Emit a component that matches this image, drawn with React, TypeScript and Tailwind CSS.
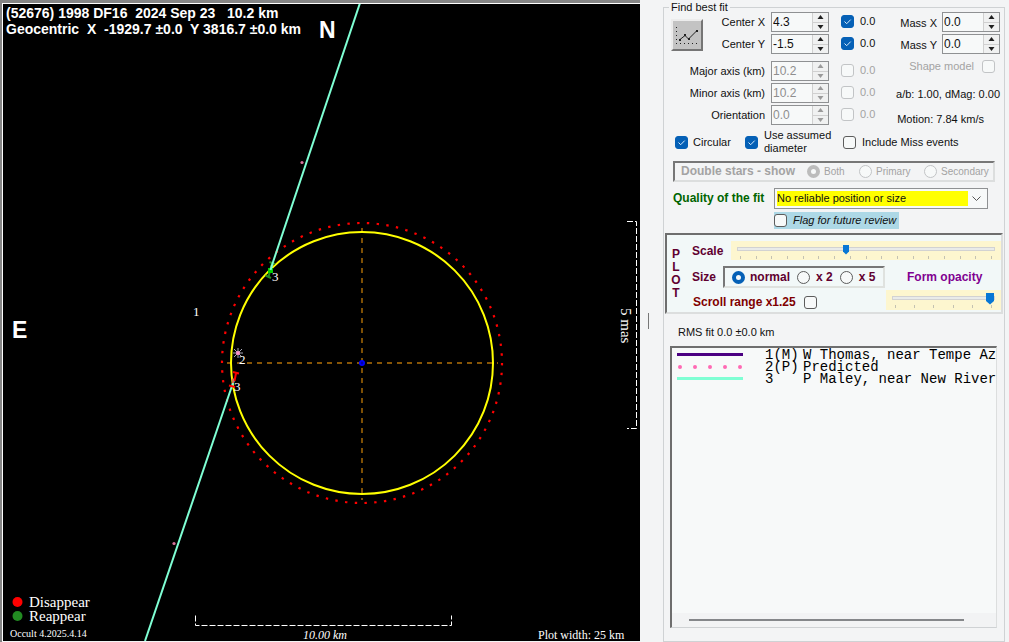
import React, { useState } from "react";

const INK = "text-[#101010]";

function Check({
  id,
  defaultChecked,
  disabled,
  label,
}: {
  id: string;
  defaultChecked?: boolean;
  disabled?: boolean;
  label?: string;
}) {
  return (
    <span className="grid shrink-0 place-items-center">
      <input
        id={id}
        type="checkbox"
        aria-label={label}
        defaultChecked={defaultChecked}
        disabled={disabled}
        className="peer col-start-1 row-start-1 size-[13px] appearance-none rounded-[3px] border border-[#5c5c5c] bg-[#f7f9f9] checked:border-[#0560b6] checked:bg-[#0560b6] disabled:border-[#c2c4c6]"
      />
      <svg
        viewBox="0 0 13 13"
        className="pointer-events-none invisible col-start-1 row-start-1 size-[13px] peer-checked:visible"
      >
        <path d="M3.5 6.5 L5.7 8.7 L9.7 4.6" fill="none" stroke="#d9ecfb" strokeWidth="1" />
      </svg>
    </span>
  );
}

function Radio({
  name,
  label,
  defaultChecked,
  disabled,
  className,
}: {
  name: string;
  label: string;
  defaultChecked?: boolean;
  disabled?: boolean;
  className: string;
}) {
  return (
    <label className={"flex items-center whitespace-pre " + className}>
      <input
        type="radio"
        name={name}
        defaultChecked={defaultChecked}
        disabled={disabled}
        className="size-[13px] shrink-0 appearance-none rounded-full border border-[#5c5c5c] bg-[#f7f9f9] checked:border-4 checked:border-[#0560b6] disabled:border-[#c2c4c6] disabled:checked:border-[#bcbcbc]"
      />
      {label}
    </label>
  );
}

function Spin({ id, value, disabled }: { id: string; value: string; disabled?: boolean }) {
  const [v, setV] = useState(value);
  const step = (d: number) => setV((Number(v) + d).toFixed(1));
  const arrow = disabled ? "#9a9a9a" : "#202020";
  return (
    <span className="flex h-5 w-[58px] shrink-0 border border-[#8f9193] bg-[#f7f9f9]">
      <input
        id={id}
        value={v}
        disabled={disabled}
        onChange={(e) => setV(e.target.value)}
        className="w-0 min-w-0 flex-1 pl-px text-[12px] leading-4 text-[#101010] outline-none disabled:text-[#8e8e8e]"
      />
      <span className="flex w-4 flex-col bg-[#f0f1f1]">
        <button
          type="button"
          aria-label="Increase"
          disabled={disabled}
          onClick={() => step(0.1)}
          className="grid flex-1 place-items-center border-b border-l border-[#d0d0d0]"
        >
          <svg viewBox="0 0 7 4" className="h-1 w-[7px]">
            <path d="M3.5 0 L6.5 4 H.5Z" fill={arrow} />
          </svg>
        </button>
        <button
          type="button"
          aria-label="Decrease"
          disabled={disabled}
          onClick={() => step(-0.1)}
          className="grid flex-1 place-items-center border-l border-[#d0d0d0]"
        >
          <svg viewBox="0 0 7 4" className="h-1 w-[7px]">
            <path d="M.5 0 H6.5 L3.5 4Z" fill={arrow} />
          </svg>
        </button>
      </span>
    </span>
  );
}

const fitRows = [
  { id: "cx", label: "Center X", value: "4.3", on: true },
  { id: "cy", label: "Center Y", value: "-1.5", on: true },
  { id: "major", label: "Major axis (km)", value: "10.2", on: false },
  { id: "minor", label: "Minor axis (km)", value: "10.2", on: false },
  { id: "orient", label: "Orientation", value: "0.0", on: false },
];

function FitGrid() {
  return (
    <div className="grid grid-cols-[94px_58px_46px] grid-rows-[22px_27px_22px_22px_22px] items-start gap-x-[6px]">
      <button
        type="button"
        aria-label="Find best fit"
        className="col-start-1 row-span-2 row-start-1 mt-[7px] size-8 justify-self-start border-2 border-t-[#ececec] border-r-[#757575] border-b-[#757575] border-l-[#ececec] bg-[#c3c3c3]"
      >
        <svg viewBox="0 0 28 28" className="size-7">
          <g fill="none" stroke="#222">
            <path d="M3.5 6V23" strokeDasharray="1 3" />
            <path d="M3 22.5H26" strokeDasharray="1 3" />
            <path d="M7 18.500 L12 14.5 L15.5 18 L24 9.500" />
          </g>
          <path d="M6 18h2v2H6zM11 13h2v2h-2zM15 17h2v2h-2zM23 9h2v2h-2z" fill="#222" />
        </svg>
      </button>
      {fitRows.map((r, i) => (
        <React.Fragment key={r.id}>
          <label
            htmlFor={r.id}
            style={{ gridRow: i + 1 }}
            className="col-start-1 justify-self-end leading-[21px] whitespace-nowrap"
          >
            {r.label}
          </label>
          <div style={{ gridRow: i + 1 }} className="col-start-2">
            <Spin id={r.id} value={r.value} disabled={!r.on} />
          </div>
          <label
            style={{ gridRow: i + 1 }}
            className={
              "col-start-3 flex h-[19px] items-center gap-[6px] pl-[6px] " + (r.on ? "" : "text-[#a3a3a3]")
            }
          >
            <Check id={"use-" + r.id} defaultChecked={r.on} disabled={!r.on} />
            0.0
          </label>
        </React.Fragment>
      ))}
    </div>
  );
}

function Slider({
  label,
  value,
  ticks,
  thumb,
}: {
  label: string;
  value: number;
  ticks: number;
  thumb: string;
}) {
  return (
    <div className="flex-1 bg-[#fdf6cf] px-[6px]">
      <input
        type="range"
        aria-label={label}
        defaultValue={value}
        className={
          "block h-[15px] w-full appearance-none bg-transparent [&::-webkit-slider-runnable-track]:h-1 [&::-webkit-slider-runnable-track]:border [&::-webkit-slider-runnable-track]:border-[#d2d2d2] [&::-webkit-slider-runnable-track]:bg-[#e9ebe9] [&::-webkit-slider-thumb]:appearance-none [&::-webkit-slider-thumb]:bg-[#0877d5] [&::-webkit-slider-thumb]:[clip-path:polygon(0_0,100%_0,100%_70%,50%_100%,0_70%)] " +
          thumb
        }
      />
      <div className="flex justify-between px-[3px]">
        {Array.from({ length: ticks }, (_, i) => (
          <span key={i} className="h-[3px] w-px bg-[#c4c2b2]" />
        ))}
      </div>
    </div>
  );
}

const SANS = "Liberation Sans, Arial, sans-serif";
const SERIF = "Liberation Serif, Times New Roman, serif";

function Plot() {
  return (
    <section className="h-screen min-w-0 flex-1 border-t-3 border-l-2 border-[#858585] pb-px">
      <svg
        viewBox="3 4 637 637"
        role="img"
        aria-label="Occultation plot"
        className="block h-full w-full border-t border-l border-white bg-black"
      >
        <g fill="#fff" fontFamily={SANS} fontWeight="bold">
          <text x="6" y="18" fontSize="14" className="whitespace-pre">
            {"(52676) 1998 DF16  2024 Sep 23   10.2 km"}
          </text>
          <text x="6" y="34" fontSize="14" className="whitespace-pre">
            {"Geocentric  X  -1929.7 ±0.0  Y 3816.7 ±0.0 km"}
          </text>
          <text x="319" y="38" fontSize="23">N</text>
          <text x="12" y="338" fontSize="23">E</text>
        </g>

        <g stroke="#b47208" strokeWidth="1.4" strokeDasharray="5 5" fill="none">
          <path d="M362 228V500" />
          <path d="M227 363H498" />
        </g>
        <circle
          cx="362"
          cy="363"
          r="140"
          fill="none"
          stroke="#f00"
          strokeWidth="2.2"
          strokeDasharray="2.4 7.37"
        />
        <circle cx="362" cy="363" r="131" fill="none" stroke="#ff0" strokeWidth="2" />
        <circle cx="362" cy="363" r="2.2" fill="#00a" stroke="#00f" strokeWidth="1.6" />

        <g stroke="#7fffd4" strokeWidth="2">
          <path d="M360 3L270 271" />
          <path d="M234 380L145 641" />
        </g>
        <g stroke="#228b22" strokeWidth="2" fill="none">
          <path d="M269.500 262L275 264M272 263L268.500 277M265.500 275.500L271 278" />
        </g>
        <rect x="268" y="268" width="5" height="5" fill="#00d000" />
        <path d="M273 262L270.500 270" stroke="#7fffd4" strokeWidth="2" />
        <g stroke="#f00" strokeWidth="2" fill="none">
          <path d="M233 372L239 373.500M236 373L234.500 381M229 385.500L235 387" />
        </g>
        <path d="M233 378.500V383" stroke="#d86a50" strokeWidth="2" />
        <g stroke="#a5a5b5" strokeWidth="1">
          <path d="M238 348V358M233 353H243M234 349L242 357M242 349L234 357" />
        </g>
        <circle cx="238" cy="353" r="2" fill="#ff8fc8" />
        <circle cx="302" cy="162.500" r="1.6" fill="#d87099" />
        <circle cx="174" cy="543.500" r="1.6" fill="#d87099" />

        <g stroke="#fff" strokeDasharray="6 2" fill="none">
          <path d="M195.500 615.500V625.500H451.500V615.500" />
          <path d="M627 221.500H636.500V428.500H627" />
        </g>

        <g fill="#fff" fontFamily={SERIF}>
          <g fontSize="13">
            <text x="193" y="316">1</text>
            <text x="239" y="364">2</text>
            <text x="272" y="281">3</text>
            <text x="234" y="391">3</text>
          </g>
          <text x="29" y="607" fontSize="15">Disappear</text>
          <text x="29" y="621" fontSize="15">Reappear</text>
          <text x="10" y="637" fontSize="10">Occult 4.2025.4.14</text>
          <text x="303" y="639" fontSize="12" fontStyle="italic">10.00 km</text>
          <text x="538" y="639" fontSize="12">Plot width: 25 km</text>
          <text transform="translate(621 308) rotate(90)" fontSize="15">5 mas</text>
        </g>
        <circle cx="17.500" cy="602" r="5" fill="#f00" />
        <circle cx="17.500" cy="616" r="5" fill="#228b22" />
      </svg>
    </section>
  );
}

function PlotControls() {
  return (
    <div className="mx-px mt-1 flex h-[81px] border-2 border-t-[#6e6e6e] border-r-[#dcdede] border-b-[#dcdede] border-l-[#6e6e6e] bg-[#f2f8f8] text-[12px] font-bold text-[#600030]">
      <div className="flex w-[18px] flex-col items-center pt-[13px] leading-[13px]">
        <span>P</span>
        <span>L</span>
        <span>O</span>
        <span>T</span>
      </div>
      <div className="flex min-w-0 flex-1 flex-col pl-[7px]">
        <div className="mt-[6px] flex h-[19px]">
          <span className="w-[39px] leading-[20px]">Scale</span>
          <Slider
            label="Scale"
            value={42}
            ticks={17}
            thumb="[&::-webkit-slider-thumb]:-mt-[3px] [&::-webkit-slider-thumb]:h-[10px] [&::-webkit-slider-thumb]:w-[6px]"
          />
        </div>
        <div className="mt-[6px] flex h-[22px] items-center">
          <span className="w-[31px]">Size</span>
          <div className="flex h-[22px] w-[162px] items-center gap-[7px] border-2 border-t-[#777] border-r-[#dfe2df] border-b-[#dfe2df] border-l-[#777] pl-[7px]">
            <Radio name="size" label="normal" defaultChecked className="gap-[5px]" />
            <Radio name="size" label="x 2" className="gap-[6px]" />
            <Radio name="size" label="x 5" className="gap-[6px]" />
          </div>
          <span className="ml-[22px] whitespace-nowrap text-[#800090]">Form opacity</span>
        </div>
        <div className="mt-[2px] flex h-[20px]">
          <label className="flex w-[194px] items-center gap-[8px] pt-[4px] pl-px whitespace-nowrap text-[#800000]">
            Scroll range x1.25
            <Check id="scroll-range" />
          </label>
          <Slider
            label="Form opacity"
            value={100}
            ticks={6}
            thumb="[&::-webkit-slider-thumb]:-mt-[4px] [&::-webkit-slider-thumb]:h-[12px] [&::-webkit-slider-thumb]:w-2"
          />
        </div>
      </div>
    </div>
  );
}

const observers = [
  { no: "1(M)", name: "W Thomas, near Tempe Az", stroke: "#4b0082", dash: undefined },
  { no: "2(P)", name: "Predicted", stroke: "#ff69b4", dash: "0 15" },
  { no: "3", name: "P Maley, near New River", stroke: "#7fffd4", dash: undefined },
];

function Observers() {
  return (
    <div className="mt-[7px] mr-[7px] mb-[13px] ml-[6px] flex flex-1 flex-col border border-t-2 border-l-2 border-t-[#6e6e6e] border-r-[#dcdede] border-b-[#cfd2d4] border-l-[#6e6e6e] bg-[#f7f9f9]">
      <ul className="flex-1 overflow-hidden pt-px font-['Liberation_Mono','Courier_New',monospace] text-[14px] leading-[12px] text-black">
        {observers.map((o) => (
          <li key={o.no} className="flex h-3 whitespace-nowrap">
            <svg viewBox="0 0 93 12" className="h-3 w-[93px] shrink-0">
              <path
                d={o.dash ? "M8 6H71" : "M5 5.500H71"}
                stroke={o.stroke}
                strokeWidth={o.dash ? 4 : 3}
                strokeDasharray={o.dash}
                strokeLinecap={o.dash ? "round" : "butt"}
              />
            </svg>
            <span className="w-[38px] shrink-0">{o.no}</span>
            <span>{o.name}</span>
          </li>
        ))}
      </ul>
      <div className="flex h-[14px] items-center bg-[#f2f3f4] pr-8 pl-[17px]">
        <div className="h-[2px] w-full bg-[#85878a]" />
      </div>
    </div>
  );
}

export default function App() {
  return (
    <main
      className={
        "flex min-h-screen bg-[#f3f4f5] font-['Liberation_Sans',Arial,sans-serif] text-[11px] leading-[13px] " +
        INK
      }
    >
      <Plot />
      <div className="flex w-[23px] shrink-0 items-center pl-2">
        <div className="h-4 w-px bg-[#777]" />
      </div>
      <form className="flex w-[346px] shrink-0 pt-[2px] pr-1">
        <fieldset className="flex w-full min-w-0 flex-col border border-[#cfd2d4]">
          <legend className="ml-[5px] px-[2px] leading-[10px]">Find best fit</legend>

          <div className="flex pl-[7px]">
            <FitGrid />
            <div className="flex flex-1 flex-col pr-1">
              <label className="flex h-[22px] items-start justify-end gap-[5px] leading-[22px]">
                Mass X
                <Spin id="mass-x" value="0.0" />
              </label>
              <label className="flex h-[22px] items-start justify-end gap-[5px] leading-[22px]">
                Mass Y
                <Spin id="mass-y" value="0.0" />
              </label>
              <label className="mt-1 mr-[5px] flex items-center justify-end gap-2 text-[#a3a3a3]">
                Shape model
                <Check id="shape-model" disabled />
              </label>
              <p className="mt-[15px] self-end text-[11px] whitespace-nowrap">a/b: 1.00, dMag: 0.00</p>
              <p className="mt-3 mr-4 self-end whitespace-nowrap">Motion: 7.84 km/s</p>
            </div>
          </div>

          <div className="mt-px flex h-[28px] items-center pl-[11px] whitespace-nowrap">
            <label className="flex w-[70px] items-center gap-[5px]">
              <Check id="circular" defaultChecked />
              Circular
            </label>
            <label className="flex w-[98px] items-center gap-[6px]">
              <Check id="assumed" defaultChecked />
              <span>
                Use assumed
                <br />
                diameter
              </span>
            </label>
            <label className="flex items-center gap-[6px]">
              <Check id="miss" />
              Include Miss events
            </label>
          </div>

          <div className="mt-[5px] mr-[9px] ml-[9px] flex h-[21px] items-center border-2 border-t-[#777] border-r-[#dcdede] border-b-[#dcdede] border-l-[#777] pl-[6px] text-[10px] text-[#a3a3a3]">
            <span className="mr-3 text-[12px] font-bold">Double stars - show</span>
            <Radio name="double" label="Both" defaultChecked disabled className="w-[52px] gap-[4px]" />
            <Radio name="double" label="Primary" disabled className="w-[65px] gap-[4px]" />
            <Radio name="double" label="Secondary" disabled className="gap-[4px]" />
          </div>

          <div className="mt-[6px] flex items-center pl-[9px]">
            <label htmlFor="quality" className="w-[101px] text-[12px] font-bold whitespace-nowrap text-[#006400]">
              Quality of the fit
            </label>
            <span className="grid h-[21px] w-[214px] border border-[#8f9193] bg-[#f7f9f9] p-[2px]">
              <select
                id="quality"
                className="col-start-1 row-start-1 mr-[17px] appearance-none bg-[#ff0] leading-[15px] outline-none"
              >
                <option>No reliable position or size</option>
              </select>
              <svg
                viewBox="0 0 9 5"
                className="pointer-events-none col-start-1 row-start-1 mr-[4px] h-[5px] w-[9px] self-center justify-self-end"
              >
                <path d="M.5.5L4.500 4.500L8.500.5" fill="none" stroke="#555" />
              </svg>
            </span>
          </div>
          <label className="mt-[3px] ml-[110px] flex h-[17px] w-[125px] items-center gap-[6px] bg-[#add8e6] whitespace-nowrap italic">
            <Check id="flag" />
            Flag for future review
          </label>

          <PlotControls />
          <p className="mt-3 pl-[14px]">RMS fit 0.0 ±0.0 km</p>
          <Observers />
        </fieldset>
      </form>
    </main>
  );
}
